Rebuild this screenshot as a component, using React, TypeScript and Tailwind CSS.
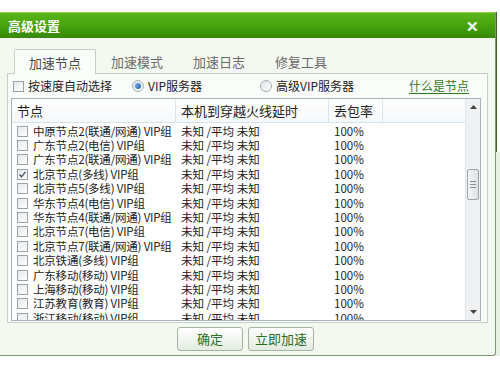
import { useState } from "react"

const FONT = { fontFamily: "'SimSun', 'Noto Sans CJK SC', 'Noto Sans', sans-serif" }

type NodeRow = { name: string; checked?: boolean }

const NODES: NodeRow[] = [
  { name: "中原节点2(联通/网通) VIP组" },
  { name: "广东节点2(电信) VIP组" },
  { name: "广东节点2(联通/网通) VIP组" },
  { name: "北京节点(多线) VIP组", checked: true },
  { name: "北京节点5(多线) VIP组" },
  { name: "华东节点4(电信) VIP组" },
  { name: "华东节点4(联通/网通) VIP组" },
  { name: "北京节点7(电信) VIP组" },
  { name: "北京节点7(联通/网通) VIP组" },
  { name: "北京铁通(多线) VIP组" },
  { name: "广东移动(移动) VIP组" },
  { name: "上海移动(移动) VIP组" },
  { name: "江苏教育(教育) VIP组" },
  { name: "浙江移动(移动) VIP组" },
]

const TABS = ["加速节点", "加速模式", "加速日志", "修复工具"]

function Check({ checked }: { checked?: boolean }) {
  return (
    <span className="flex h-[11px] w-[11px] shrink-0 items-center justify-center border border-[#9aa3a8] bg-gradient-to-br from-[#e6e8ea] to-white">
      {checked && (
        <svg width="9" height="9" viewBox="0 0 9 9">
          <path d="M1.5 4.5 L3.5 6.8 L7.5 1.8" fill="none" stroke="#3c4a63" strokeWidth="1.3" />
        </svg>
      )}
    </span>
  )
}

function Radio({ on }: { on?: boolean }) {
  return (
    <span className="flex h-[12px] w-[12px] shrink-0 items-center justify-center rounded-full border border-[#a4acb1] bg-gradient-to-br from-[#dfe3e6] to-white">
      {on && <span className="h-[6px] w-[6px] rounded-full bg-gradient-to-br from-[#7fb2e8] to-[#1d5fa8]" />}
    </span>
  )
}

export default function App() {
  const [tab, setTab] = useState(0)

  return (
    <div className="flex h-[374px] w-[500px] flex-col overflow-hidden bg-white text-[12px] text-[#222]" style={FONT}>
      <div className="h-[12px] shrink-0 bg-white" />
      <div className="flex flex-1">
        <div className="flex w-[496px] flex-col rounded-br-[3px] border-b border-r border-[#7d9a73] bg-[#f3f8f1]">
          {/* title bar */}
          <div className="flex h-[26px] shrink-0 items-center justify-between border-t border-[#8fd04c] bg-gradient-to-b from-[#5bb51a] via-[#47a30c] to-[#36880a] pl-[8px] pr-[16px]">
            <span className="text-[13px] font-bold text-white">高级设置</span>
            <span className="text-[15px] font-bold leading-none text-white">✕</span>
          </div>

          {/* tabs */}
          <div className="flex h-[35px] shrink-0 items-end pl-[14px] pt-[10px]">
            {TABS.map((t, i) => (
              <button
                key={t}
                onClick={() => setTab(i)}
                className={
                  i === tab
                    ? "relative -mb-px h-[25px] w-[82px] rounded-t-[2px] border border-b-0 border-[#c4d0c1] bg-[#fbfdfa] pt-[2px] text-[13px] text-[#4a4a4a]"
                    : "h-[24px] w-[82px] pt-[2px] text-[13px] text-[#6a6a6a]"
                }
              >
                {t}
              </button>
            ))}
          </div>

          {/* panel */}
          <div className="mx-[7px] flex h-[250px] shrink-0 flex-col border border-[#c4d0c1] bg-[#fbfdfa]">
            <div className="flex h-[24px] shrink-0 items-center pl-[5px] pr-[18px]">
              <label className="flex items-center gap-[4px]">
                <Check />
                <span>按速度自动选择</span>
              </label>
              <label className="ml-[20px] flex items-center gap-[4px]">
                <Radio on />
                <span>VIP服务器</span>
              </label>
              <label className="ml-[58px] flex items-center gap-[4px]">
                <Radio />
                <span>高级VIP服务器</span>
              </label>
              <a className="ml-auto text-[#2e7a1f] underline underline-offset-2">什么是节点</a>
            </div>

            {/* list */}
            <div className="ml-[3px] mr-[6px] flex h-[223px] border border-[#a9b1b8] bg-white">
              <div className="flex flex-1 flex-col overflow-hidden">
                <div className="flex h-[24px] shrink-0 border-b border-[#d5e3ef] bg-gradient-to-b from-white to-[#f6f8fa] text-[13px]">
                  <div className="flex w-[164px] items-center border-r border-[#dbe5ee] pl-[5px]">节点</div>
                  <div className="flex w-[153px] items-center border-r border-[#dbe5ee] pl-[5px]">本机到穿越火线延时</div>
                  <div className="flex w-[54px] items-center border-r border-[#dbe5ee] pl-[5px]">丢包率</div>
                  <div className="flex-1" />
                </div>
                <div className="flex flex-col overflow-hidden pt-[1px] text-[11.5px] leading-[13px]">
                  {NODES.map((n) => (
                    <div key={n.name} className="flex h-[14.4px] shrink-0 items-center">
                      <div className="flex w-[164px] items-center gap-[5px] pl-[5px]">
                        <Check checked={n.checked} />
                        <span className="whitespace-nowrap tracking-[-0.2px]">{n.name}</span>
                      </div>
                      <div className="w-[153px] whitespace-nowrap pl-[5px]">未知 /平均 未知</div>
                      <div className="pl-[5px]">100%</div>
                    </div>
                  ))}
                </div>
              </div>

              {/* scrollbar */}
              <div className="flex w-[15px] shrink-0 flex-col border-l border-[#e3e6e8] bg-[#f0f1f2]">
                <div className="flex h-[16px] items-center justify-center">
                  <svg width="7" height="4" viewBox="0 0 7 4">
                    <path d="M0 4 L3.5 0 L7 4 Z" fill="#444" />
                  </svg>
                </div>
                <div className="h-[54px]" />
                <div className="mx-[1px] flex h-[31px] flex-col items-center justify-center gap-[2px] rounded-[2px] border border-[#9ea3a8] bg-gradient-to-r from-[#f4f5f6] to-[#dfe2e5]">
                  <span className="h-px w-[6px] bg-[#8a8f94]" />
                  <span className="h-px w-[6px] bg-[#8a8f94]" />
                  <span className="h-px w-[6px] bg-[#8a8f94]" />
                </div>
                <div className="flex-1" />
                <div className="flex h-[16px] items-center justify-center">
                  <svg width="7" height="4" viewBox="0 0 7 4">
                    <path d="M0 0 L3.5 4 L7 0 Z" fill="#444" />
                  </svg>
                </div>
              </div>
            </div>
          </div>

          {/* buttons */}
          <div className="flex flex-1 items-start justify-center gap-[5px] pr-[4px] pt-[4px]">
            <button className="h-[24px] w-[66px] rounded-[3px] border border-[#a4b4a0] bg-gradient-to-b from-white to-[#e4ece1] text-[13px] text-[#2d6e1c]">
              确定
            </button>
            <button className="h-[24px] w-[66px] rounded-[3px] border border-[#a4b4a0] bg-gradient-to-b from-white to-[#e4ece1] text-[13px] text-[#2d6e1c]">
              立即加速
            </button>
          </div>
        </div>
        <div className="flex w-[4px] flex-col">
          <div className="h-[140px] w-[1px] bg-[#3d6b2c]" />
          <div className="flex-1 bg-[#e8f0e3]" />
        </div>
      </div>
      <div className="h-[18px] shrink-0 bg-white" />
    </div>
  )
}
